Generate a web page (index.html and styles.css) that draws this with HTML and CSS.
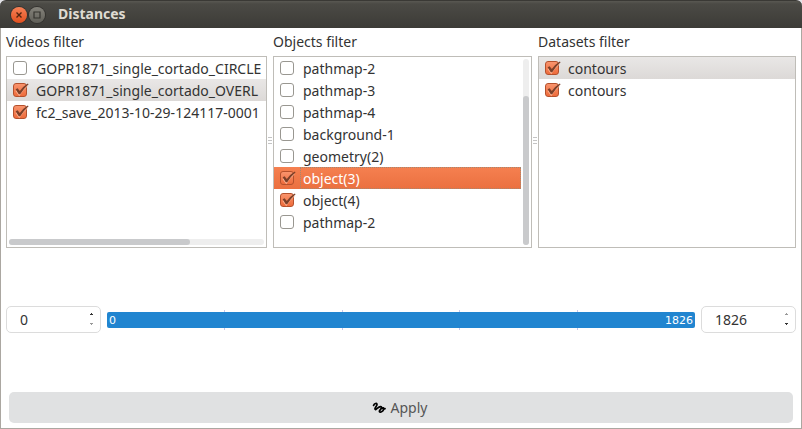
FILE: index.html
```html
<!DOCTYPE html>
<html lang="en">
<head>
<meta charset="utf-8">
<title>Distances</title>
<link rel="stylesheet" href="styles.css">
</head>
<body>
<svg class="defs" aria-hidden="true">
  <symbol id="tick" viewBox="0 0 16 14">
    <path d="M3 7.6 6.2 12.2 Q9.5 6.2 14.2 3" fill="none" stroke="#ffb493" stroke-width="1.2"/>
    <path d="M2.6 6.2 4.6 5.2 6.8 8 Q9.8 3.4 14.8 .4 L15.6 1.2 Q10.8 5.4 7.2 11.2 L5.8 11.2Z" fill="#7c4029"/>
  </symbol>
</svg>
<div class="window">
  <header class="titlebar">
    <button class="win-btn close" aria-label="Close"><svg viewBox="0 0 16 16"><path d="M5.5 5.5l5 5M10.5 5.5l-5 5" stroke="#53240f" stroke-width="1.4"/></svg></button>
    <button class="win-btn max" aria-label="Maximize"><svg viewBox="0 0 16 16"><path d="M5 5h6v6H5z" fill="none" stroke="#35342f" stroke-width="1.2"/></svg></button>
    <h1>Distances</h1>
  </header>
  <main>
    <div class="filters">
      <section class="filter">
        <h2>Videos filter</h2>
        <div class="list">
          <label class="row"><span class="check"><input type="checkbox"><svg><use href="#tick"/></svg></span><span class="name">GOPR1871_single_cortado_CIRCLE</span></label>
          <label class="row current"><span class="check"><input type="checkbox" checked><svg><use href="#tick"/></svg></span><span class="name">GOPR1871_single_cortado_OVERL</span></label>
          <label class="row"><span class="check"><input type="checkbox" checked><svg><use href="#tick"/></svg></span><span class="name">fc2_save_2013-10-29-124117-0001</span></label>
          <div class="bar horizontal"><div class="thumb"></div></div>
        </div>
      </section>
      <div class="splitter"><i></i><i></i><i></i></div>
      <section class="filter">
        <h2>Objects filter</h2>
        <div class="list scrolls">
          <label class="row"><span class="check"><input type="checkbox"><svg><use href="#tick"/></svg></span><span class="name">pathmap-2</span></label>
          <label class="row"><span class="check"><input type="checkbox"><svg><use href="#tick"/></svg></span><span class="name">pathmap-3</span></label>
          <label class="row"><span class="check"><input type="checkbox"><svg><use href="#tick"/></svg></span><span class="name">pathmap-4</span></label>
          <label class="row"><span class="check"><input type="checkbox"><svg><use href="#tick"/></svg></span><span class="name">background-1</span></label>
          <label class="row"><span class="check"><input type="checkbox"><svg><use href="#tick"/></svg></span><span class="name">geometry(2)</span></label>
          <label class="row selected"><span class="check"><input type="checkbox" checked><svg><use href="#tick"/></svg></span><span class="name">object(3)</span></label>
          <label class="row"><span class="check"><input type="checkbox" checked><svg><use href="#tick"/></svg></span><span class="name">object(4)</span></label>
          <label class="row"><span class="check"><input type="checkbox"><svg><use href="#tick"/></svg></span><span class="name">pathmap-2</span></label>
          <div class="bar vertical"><div class="thumb"></div></div>
        </div>
      </section>
      <div class="splitter"><i></i><i></i><i></i></div>
      <section class="filter">
        <h2>Datasets filter</h2>
        <div class="list">
          <label class="row current"><span class="check"><input type="checkbox" checked><svg><use href="#tick"/></svg></span><span class="name">contours</span></label>
          <label class="row"><span class="check"><input type="checkbox" checked><svg><use href="#tick"/></svg></span><span class="name">contours</span></label>
        </div>
      </section>
    </div>
    <div class="range">
      <div class="spin at-min">
        <input type="text" inputmode="numeric" value="0" aria-label="Start">
        <div class="steps">
          <button aria-label="Increase start"><svg viewBox="0 0 5 3"><path d="M2 0h1v1h1v1H1V1h1z"/></svg></button>
          <button aria-label="Decrease start"><svg viewBox="0 0 5 3"><path d="M1 0h3v1H3v1H2V1H1z"/></svg></button>
        </div>
      </div>
      <div class="track">
        <div class="ticks"><i></i><i></i><i></i><i></i><i></i></div>
        <div class="fill"><span>0</span><span>1826</span></div>
      </div>
      <div class="spin at-max">
        <input type="text" inputmode="numeric" value="1826" aria-label="End">
        <div class="steps">
          <button aria-label="Increase end"><svg viewBox="0 0 5 3"><path d="M2 0h1v1h1v1H1V1h1z"/></svg></button>
          <button aria-label="Decrease end"><svg viewBox="0 0 5 3"><path d="M1 0h3v1H3v1H2V1H1z"/></svg></button>
        </div>
      </div>
    </div>
    <button class="apply">
      <svg viewBox="0 0 14 14"><path d="M1.6 4.4C2.4 2.4 5 1.6 5 3.4 5 5 2.4 6.8 3 8.2 3.8 9.6 6 5.8 8.4 5.6 11 5.4 8.6 8.6 7.6 9.6 7 11 8.2 11.6 9.8 10.6 11.8 9.4 12.2 7.4 11.2 6.8 10.2 6.8 10.4 8.4 13 7.6" fill="none" stroke="#000" stroke-width="1.7" stroke-linecap="round" stroke-linejoin="round"/></svg>
      <span>Apply</span>
    </button>
  </main>
</div>
</body>
</html>
```
FILE: styles.css
```css
* { box-sizing: border-box; }

body {
  margin: 0;
  background: #e4e4e8;
  font-family: "Noto Sans", "Open Sans", sans-serif;
  font-size: 14px;
  line-height: 22px;
  color: #333;
}

button, input { margin: 0; padding: 0; font: inherit; color: inherit; }
button { border: 0; background: none; }
h1, h2 { margin: 0; font-size: inherit; }

.defs { position: absolute; width: 0; height: 0; }

.window {
  display: flex;
  flex-direction: column;
  min-height: 100vh;
}

.titlebar {
  display: flex;
  align-items: center;
  gap: 2px;
  height: 28px;
  padding: 0 11px;
  border-top: 1px solid #3a3935;
  border-radius: 6px 6px 0 0;
  background: linear-gradient(#595852, #4b4a45 3px, #3c3b37);
  color: #dfdbd2;
}

.titlebar h1 { margin-left: 11px; line-height: 26px; padding-bottom: 2px; }

.win-btn {
  width: 16px;
  height: 16px;
  border-radius: 50%;
  box-shadow: 0 0 0 1px #34332f;
}
.win-btn svg { display: block; }
.close { background: linear-gradient(#f78156, #e2501f); }
.max { background: linear-gradient(#85837b, #605f58); }

main {
  flex: 1;
  display: flex;
  flex-direction: column;
  justify-content: space-between;
  padding: 3px 5px 5px;
  border: 1px solid #aba7a1;
  border-top: 0;
  background: #fff;
}

.filters {
  display: grid;
  grid-template-columns: 261fr 6px 259fr 6px 258fr;
  margin-bottom: -1px;
}

.filter { min-width: 0; }
.filter h2 { height: 25px; font-weight: 400; }

.list {
  position: relative;
  height: 192px;
  overflow: hidden;
  border: 1px solid #bfbdb8;
}
.scrolls { padding-right: 10px; }

.row {
  display: flex;
  align-items: center;
  height: 22px;
  padding-left: 6px;
  white-space: nowrap;
}
.row.current { background: linear-gradient(#e9e7e6, #dcd9d7); }
.row.selected { background: linear-gradient(#f58050, #eb7040); color: #fff; }

.name { flex: 1; height: 22px; margin-left: 6px; padding-left: 3px; line-height: 24px; }
.selected .name { line-height: 22px; border: 1px dotted #a28873; padding-left: 2px; }

.check { display: grid; width: 14px; height: 14px; }
.check > * { grid-area: 1 / 1; }
.check input {
  appearance: none;
  width: 14px;
  height: 14px;
  border: 1px solid #999791;
  border-radius: 3px;
  background: #fff;
}
.check input:checked {
  border-color: #b5512d;
  background: linear-gradient(#f9946d, #ee6c3c);
}
.check svg { width: 16px; height: 14px; visibility: hidden; pointer-events: none; }
.check input:checked + svg { visibility: visible; }

.bar { position: absolute; border-radius: 3px; background: #eee; }
.thumb { border-radius: 3px; background: #c9cacc; }
.horizontal { left: 2px; right: 2px; bottom: 2px; height: 6px; }
.horizontal .thumb { width: 71%; height: 100%; }
.vertical { top: 2px; bottom: 2px; right: 2px; width: 6px; display: flex; align-items: flex-end; }
.vertical .thumb { width: 100%; height: 80%; }

.splitter {
  display: flex;
  flex-direction: column;
  align-items: center;
  gap: 2px;
  padding-top: 106px;
}
.splitter i { width: 4px; height: 1px; background: #c4c4c4; }

.range { display: flex; align-items: center; gap: 6px; }

.spin {
  display: flex;
  width: 95px;
  height: 27px;
  padding: 0 6px 0 13px;
  border: 1px solid #dcdcdc;
  border-radius: 5px;
}
.spin input { flex: 1; min-width: 0; border: 0; background: none; outline: 0; }
.steps { display: flex; flex-direction: column; justify-content: center; gap: 7px; }
.steps button { width: 5px; height: 3px; }
.steps svg { display: block; width: 5px; height: 3px; fill: #333; }
.at-min button:last-child svg, .at-max button:first-child svg { fill: #999; }

.track { flex: 1; display: grid; align-items: center; }
.track > * { grid-area: 1 / 1; }
.ticks { display: flex; height: 20px; }
.ticks i { flex: 1; }
.ticks i + i { border-left: 1px solid #c6c6ea; }
.fill {
  display: flex;
  justify-content: space-between;
  height: 16px;
  padding: 0 2px;
  border-radius: 2px;
  background: #2185d0;
  color: #fff;
  font: 11px/17px "DejaVu Sans", sans-serif;
}

.apply {
  display: flex;
  align-items: center;
  justify-content: center;
  gap: 5px;
  height: 31px;
  margin: 0 3px;
  padding-right: 3px;
  border-radius: 5px;
  background: #e0e1e2;
  color: #555;
}
.apply svg { width: 14px; height: 14px; }
```
